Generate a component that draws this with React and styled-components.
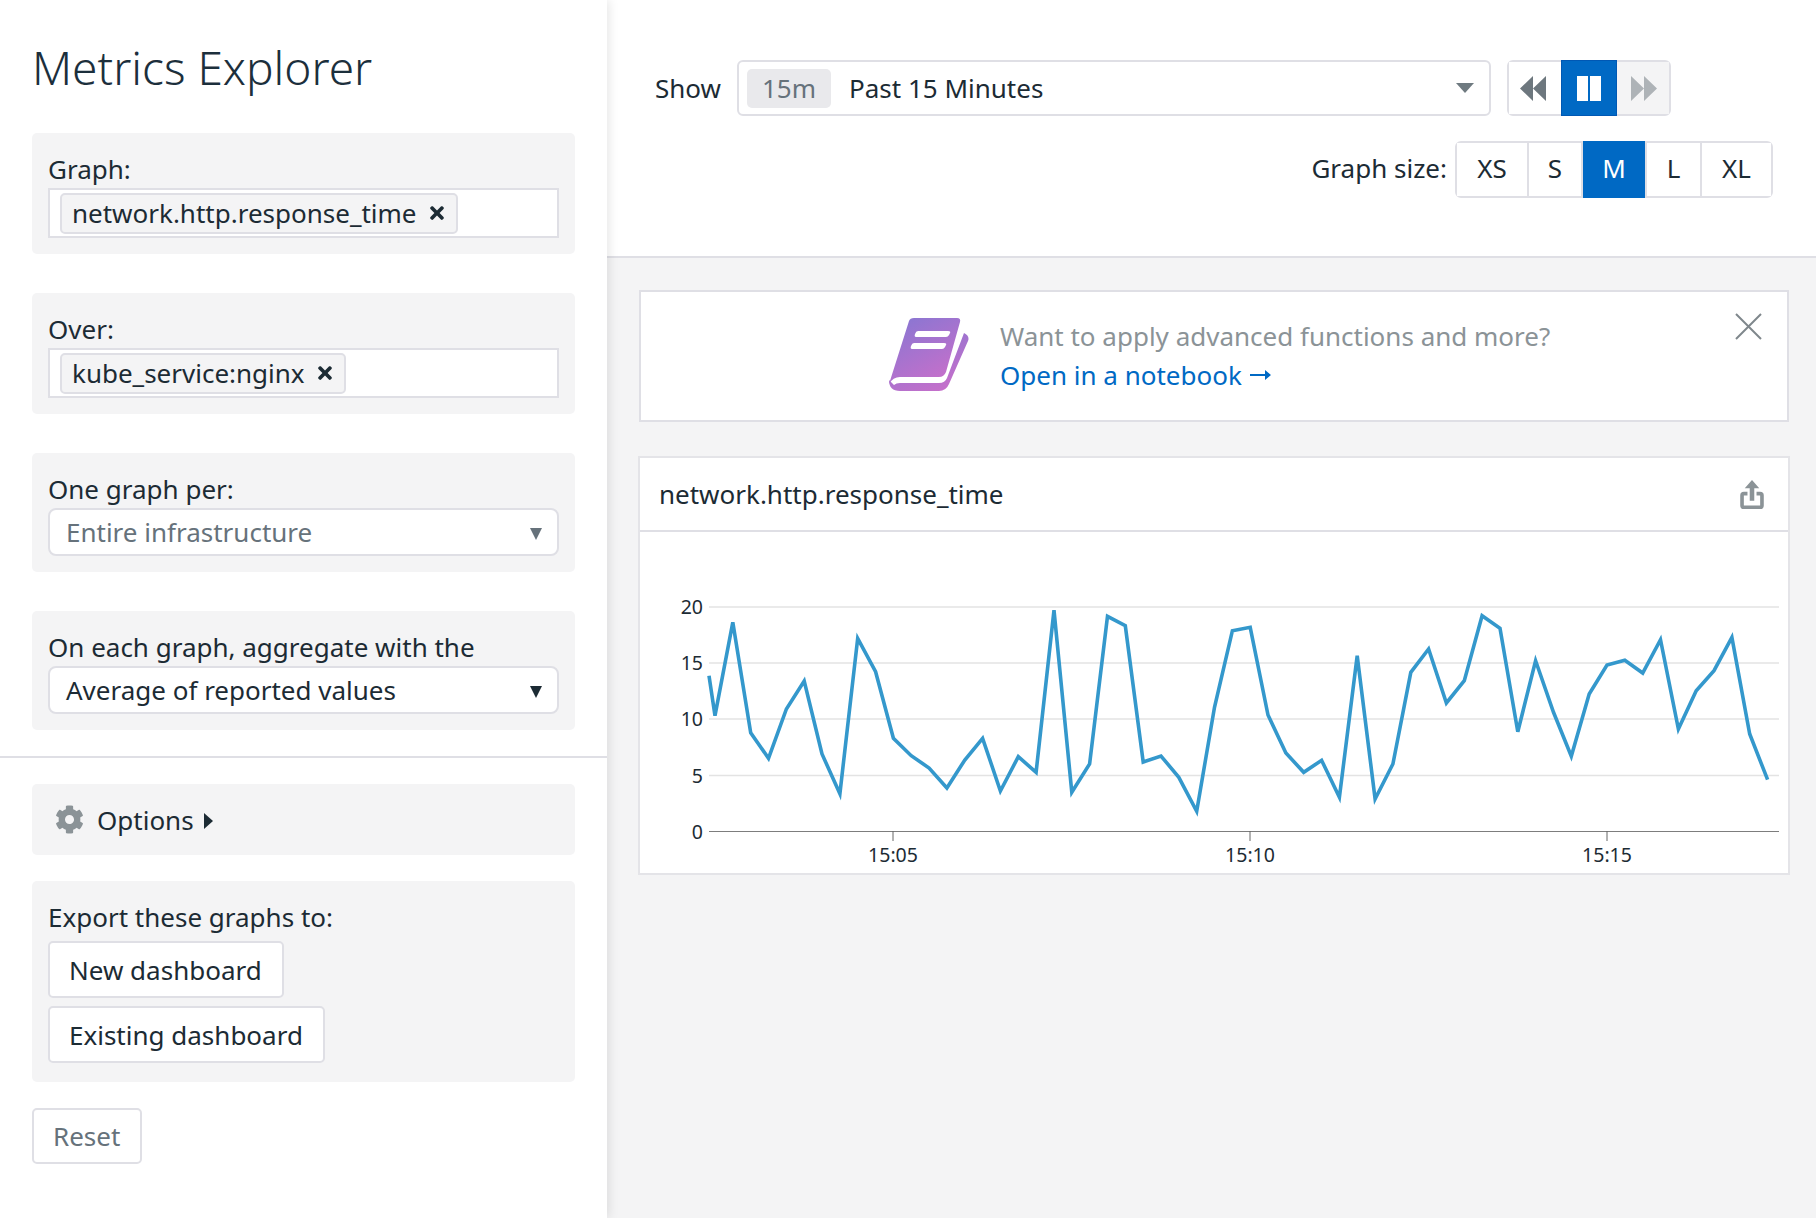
import React from "react";
import styled, { createGlobalStyle } from "styled-components";
import { FaCog, FaTimes } from "react-icons/fa";

const GlobalStyle = createGlobalStyle`
  html, body {
    margin: 0;
    padding: 0;
    background: #fff;
  }
  * {
    box-sizing: border-box;
  }
`;

const seriesY = [
  716.7, 623.3, 733.7, 759.3, 710, 682, 755, 794.7, 639.3, 672.7, 739.3, 756.7,
  769, 789, 761, 739.3, 792, 757.7, 773.3, 611.3, 793.3, 765, 617.3, 626.7, 763,
  757, 778.3, 812.3, 708.3, 631.7, 628.3, 716, 754, 773.3, 761.3, 798.3, 656.7,
  800, 765, 673.3, 650, 704, 681.7, 616.7, 629.3, 732.7, 661.7, 713.3, 757.3,
  695, 666, 661.3, 674, 640.7, 730, 691.7, 671.7, 638.3, 735, 780.7,
];

const CHART_LEFT = 640;
const CHART_TOP = 533;
const grid = [
  { label: "20", y: 608 },
  { label: "15", y: 664 },
  { label: "10", y: 720 },
  { label: "5", y: 776.5 },
];
const ticks = [
  { label: "15:05", x: 893 },
  { label: "15:10", x: 1250 },
  { label: "15:15", x: 1607 },
];
const sizes = [
  { name: "XS", width: 72 },
  { name: "S", width: 54 },
  { name: "M", width: 64 },
  { name: "L", width: 55 },
  { name: "XL", width: 69 },
];

function Chart() {
  const points = seriesY.map(
    (y, i) => `${(715 + i * 17.84 - CHART_LEFT).toFixed(1)},${(y - CHART_TOP).toFixed(1)}`
  );
  const start = `${709 - CHART_LEFT},${676.7 - CHART_TOP}`;
  return (
    <ChartSvg viewBox="0 0 1148 339">
      {grid.map(({ label, y }) => (
        <g key={label}>
          <line x1="69" x2="1139" y1={y - CHART_TOP} y2={y - CHART_TOP} stroke="#e3e3e3" strokeWidth="1.4" />
          <AxisText x="63" y={y - CHART_TOP + 7} textAnchor="end">{label}</AxisText>
        </g>
      ))}
      <line x1="69" x2="1139" y1="299.5" y2="299.5" stroke="#7d7d7d" strokeWidth="1.2" />
      <AxisText x="63" y="307" textAnchor="end">0</AxisText>
      {ticks.map(({ label, x }) => (
        <g key={label}>
          <line x1={x - CHART_LEFT} x2={x - CHART_LEFT} y1="299" y2="309" stroke="#666" strokeWidth="1" />
          <AxisText x={x - CHART_LEFT} y="330" textAnchor="middle">{label}</AxisText>
        </g>
      ))}
      <polyline
        points={`${start} ${points.join(" ")}`}
        fill="none"
        stroke="#3498cc"
        strokeWidth="3.6"
        strokeLinejoin="miter"
      />
    </ChartSvg>
  );
}

function BookIcon() {
  return (
    <BookSvg viewBox="0 0 80 74">
      <defs>
        <linearGradient id="book" x1="0.2" y1="0" x2="0.8" y2="1">
          <stop offset="0" stopColor="#8a76d2" />
          <stop offset="1" stopColor="#c96fca" />
        </linearGradient>
      </defs>
      <path
        fill="url(#book)"
        d="M20 3 Q21 0 25 0 H68 Q72 0 71 4 L57 54 Q55 59 50 59 H11 Q4 59 0 66 Z"
      />
      <path
        fill="url(#book)"
        d="M0 62 Q0 73 11 73 H50 Q57 73 60 66 L79 23 Q81 18 75 15 L58 60 Q56 65 50 65 H11 Q7 65 5 67 Z"
      />
      <path fill="#fff" d="M29 13 H59 Q62 13 61 15 L60 17 Q59 19 57 19 H27 Q25 19 26 16 Q27 13 29 13 Z" />
      <path fill="#fff" d="M25 25 H55 Q58 25 57 27 L56 29 Q55 31 53 31 H23 Q21 31 22 28 Q23 25 25 25 Z" />
    </BookSvg>
  );
}

function ShareIcon() {
  return (
    <svg width="26" height="29" viewBox="0 0 26 32">
      <path d="M13 0 L21 9 H15.5 V23 H10.5 V9 H5 Z" fill="#8b9397" />
      <path
        d="M8 15 H4 Q2 15 2 17 V28 Q2 30 4 30 H22 Q24 30 24 28 V17 Q24 15 22 15 H18"
        fill="none"
        stroke="#8b9397"
        strokeWidth="4"
      />
    </svg>
  );
}

function LinkArrow() {
  return (
    <ArrowSvg viewBox="0 0 21 10">
      <path d="M0 4 H15 V0 L21 5 L15 10 V6 H0 Z" fill="#0069c4" />
    </ArrowSvg>
  );
}

function Rewind({ flip, color }) {
  return (
    <svg width="26" height="25" viewBox="0 0 25 25" preserveAspectRatio="none" style={{ transform: flip ? "scaleX(-1)" : "none" }}>
      <path d="M12.5 0 L0 12.5 L12.5 25 Z M25 0 L12.5 12.5 L25 25 Z" fill={color} />
    </svg>
  );
}

export default function App() {
  return (
    <Page>
      <GlobalStyle />
      <Sidebar>
        <Title>Metrics Explorer</Title>
        <Section $gap={39}>
          <Label>Graph:</Label>
          <TagInput>
            <Tag>
              network.http.response_time
              <FaTimes size={20} color="#1c2b34" />
            </Tag>
          </TagInput>
        </Section>
        <Section $gap={39}>
          <Label>Over:</Label>
          <TagInput>
            <Tag>
              kube_service:nginx
              <FaTimes size={20} color="#1c2b34" />
            </Tag>
          </TagInput>
        </Section>
        <Section $gap={39}>
          <Label>One graph per:</Label>
          <Select $muted>
            Entire infrastructure
            <Caret $muted />
          </Select>
        </Section>
        <Section $gap={26}>
          <Label>On each graph, aggregate with the</Label>
          <Select>
            Average of reported values
            <Caret />
          </Select>
        </Section>
        <Divider />
        <OptionsBar>
          <FaCog size={29} color="#8b9397" />
          <span>Options</span>
          <OptionsArrow />
        </OptionsBar>
        <ExportSection>
          <ExportLabel>Export these graphs to:</ExportLabel>
          <ExportButton>New dashboard</ExportButton>
          <ExportButton>Existing dashboard</ExportButton>
        </ExportSection>
        <ResetButton>Reset</ResetButton>
      </Sidebar>
      <Main>
        <Header>
          <TimeRow>
            <ShowLabel>Show</ShowLabel>
            <TimeSelect>
              <TimePill>15m</TimePill>
              <span>Past 15 Minutes</span>
              <TimeCaret />
            </TimeSelect>
            <Transport>
              <TransportButton $shift={-2}><Rewind color="#6d777e" /></TransportButton>
              <PauseButton>
                <PauseBar />
                <PauseBar />
              </PauseButton>
              <TransportButton $disabled $shift={1}><Rewind flip color="#aeb3b7" /></TransportButton>
            </Transport>
          </TimeRow>
          <SizeRow>
            <SizeLabel>Graph size:</SizeLabel>
            <SizeGroup>
              {sizes.map(({ name, width }) => (
                <SizeButton key={name} $active={name === "M"} $width={width}>
                  {name}
                </SizeButton>
              ))}
            </SizeGroup>
          </SizeRow>
        </Header>
        <Content>
          <Banner>
            <BookIcon />
            <BannerText>
              <BannerLine>Want to apply advanced functions and more?</BannerLine>
              <BannerLink>
                Open in a notebook
                <LinkArrow />
              </BannerLink>
            </BannerText>
            <CloseIcon viewBox="0 0 27 27">
              <path d="M1 1 L26 26 M26 1 L1 26" stroke="#7f878c" strokeWidth="2" fill="none" />
            </CloseIcon>
          </Banner>
          <Card>
            <CardHeader>
              <span>network.http.response_time</span>
              <ShareIcon />
            </CardHeader>
            <Chart />
          </Card>
        </Content>
      </Main>
    </Page>
  );
}

const font = `"Noto Sans", "Open Sans", sans-serif`;

const Page = styled.div`
  display: flex;
  width: 1816px;
  height: 1218px;
  overflow: hidden;
  font-family: ${font};
  font-size: 26px;
  color: #1c2b34;
`;

const Sidebar = styled.aside`
  position: relative;
  z-index: 1;
  flex: 0 0 607px;
  background: #fff;
  padding-top: 39px;
  box-shadow: 2px 0 10px rgba(0, 0, 0, 0.1);
`;

const Title = styled.h1`
  margin: 0 32px 38px;
  font-size: 46px;
  line-height: 56px;
  font-weight: 300;
  color: #1c2f3c;
`;

const Section = styled.div`
  margin: 0 32px ${(props) => props.$gap}px;
  padding: 16px;
  background: #f4f4f5;
  border-radius: 5px;
`;

const Label = styled.div`
  height: 39px;
  line-height: 40px;
`;

const TagInput = styled.div`
  display: flex;
  align-items: center;
  height: 50px;
  padding-left: 10px;
  background: #fff;
  border: 2px solid #dfdfe5;
`;

const Tag = styled.div`
  display: flex;
  align-items: center;
  gap: 10px;
  height: 41px;
  padding: 0 9px 0 10px;
  background: #f4f4f5;
  border: 2px solid #dfdfe5;
  border-radius: 5px;
`;

const Select = styled.div`
  display: flex;
  align-items: center;
  justify-content: space-between;
  height: 48px;
  padding: 0 15px 0 16px;
  background: #fff;
  border: 2px solid #dfdfe5;
  border-radius: 8px;
  color: ${(props) => (props.$muted ? "#66727b" : "#1c2b34")};
`;

const Caret = styled.i`
  width: 0;
  height: 0;
  margin-top: 3px;
  border-left: 6px solid transparent;
  border-right: 6px solid transparent;
  border-top: 12px solid ${(props) => (props.$muted ? "#66727b" : "#1c2b34")};
`;

const Divider = styled.hr`
  margin: 0 0 26px;
  border: 0;
  border-top: 2px solid #dfdfe5;
`;

const OptionsBar = styled.div`
  display: flex;
  align-items: center;
  height: 71px;
  margin: 0 32px 26px;
  padding-left: 23px;
  background: #f4f4f5;
  border-radius: 5px;

  span {
    margin-left: 13px;
  }
`;

const OptionsArrow = styled.i`
  width: 0;
  height: 0;
  margin: 3px 0 0 10px;
  border-top: 8px solid transparent;
  border-bottom: 8px solid transparent;
  border-left: 9px solid #1c2b34;
`;

const ExportSection = styled.div`
  display: flex;
  flex-direction: column;
  align-items: flex-start;
  gap: 8px;
  height: 201px;
  margin: 0 32px 26px;
  padding: 16px;
  background: #f4f4f5;
  border-radius: 5px;
`;

const ExportLabel = styled.div`
  height: 36px;
  line-height: 40px;
`;

const PlainButton = styled.div`
  display: flex;
  align-items: center;
  height: 56px;
  padding: 0 20px 0 19px;
  background: #fff;
  border: 2px solid #dfdfe5;
  border-radius: 5px;
`;

const ExportButton = styled(PlainButton)`
  height: 57px;
`;

const ResetButton = styled(PlainButton)`
  width: 110px;
  margin-left: 32px;
  color: #66727b;
`;

const Main = styled.main`
  flex: 1;
  background: #f4f4f5;
`;

const Header = styled.header`
  height: 258px;
  padding: 60px 44px 0 48px;
  background: #fff;
  border-bottom: 2px solid #dfdfe5;
`;

const TimeRow = styled.div`
  display: flex;
  align-items: center;
  height: 56px;
`;

const ShowLabel = styled.span`
  width: 82px;
`;

const TimeSelect = styled.div`
  display: flex;
  align-items: center;
  gap: 18px;
  width: 754px;
  height: 56px;
  padding: 0 15px 0 8px;
  background: #fff;
  border: 2px solid #dfdfe5;
  border-radius: 6px;
`;

const TimePill = styled.span`
  display: flex;
  align-items: center;
  justify-content: center;
  width: 84px;
  height: 39px;
  background: #e9e9ec;
  border-radius: 5px;
  color: #66727b;
`;

const TimeCaret = styled.i`
  width: 0;
  height: 0;
  margin-left: auto;
  border-left: 9px solid transparent;
  border-right: 9px solid transparent;
  border-top: 10px solid #6f7a80;
`;

const Transport = styled.div`
  display: flex;
  width: 164px;
  height: 56px;
  margin-left: 16px;
  border: 2px solid #dfdfe5;
  border-radius: 6px;
`;

const TransportButton = styled.div`
  display: flex;
  align-items: center;
  justify-content: center;
  flex: 1;
  background: ${(props) => (props.$disabled ? "#f4f4f5" : "#fff")};

  svg {
    margin-left: ${(props) => props.$shift * 2}px;
  }
`;

const PauseButton = styled.div`
  display: flex;
  align-items: center;
  justify-content: center;
  gap: 2px;
  flex: 0 0 56px;
  margin: -2px 0;
  background: #0069c4;
  border: 1px solid #0058b4;
`;

const PauseBar = styled.i`
  width: 11px;
  height: 25px;
  background: #fff;
`;

const SizeRow = styled.div`
  display: flex;
  align-items: center;
  justify-content: flex-end;
  gap: 8px;
  margin-top: 25px;
`;

const SizeLabel = styled.span`
  padding-bottom: 3px;
`;

const SizeGroup = styled.div`
  display: flex;
  height: 57px;
  border: 2px solid #dfdfe5;
  border-radius: 6px;
`;

const SizeButton = styled.div`
  display: flex;
  align-items: center;
  justify-content: center;
  width: ${(props) => props.$width}px;
  padding-bottom: 3px;
  background: ${(props) => (props.$active ? "#0069c4" : "#fff")};
  color: ${(props) => (props.$active ? "#fff" : "#1c2b34")};
  border-right: 2px solid #dfdfe5;
  margin: ${(props) => (props.$active ? "-2px 0" : "0")};

  &:last-child {
    border-right: 0;
  }
`;

const Content = styled.div`
  padding: 32px 27px 0 31px;
`;

const Banner = styled.section`
  position: relative;
  display: flex;
  align-items: center;
  gap: 31px;
  width: 1150px;
  height: 132px;
  margin: 0 0 34px 1px;
  padding-left: 248px;
  background: #fff;
  border: 2px solid #dfdfe5;
`;

const BookSvg = styled.svg`
  width: 80px;
  height: 74px;
  margin-top: -3px;
`;

const BannerText = styled.div`
  display: flex;
  flex-direction: column;
  gap: 3px;
  margin-top: -1px;
`;

const BannerLine = styled.div`
  line-height: 36px;
  color: #8b9397;
`;

const BannerLink = styled.a`
  display: flex;
  align-items: center;
  gap: 8px;
  line-height: 36px;
  color: #0069c4;
`;

const ArrowSvg = styled.svg`
  width: 21px;
  height: 10px;
`;

const CloseIcon = styled.svg`
  position: absolute;
  top: 21px;
  right: 25px;
  width: 27px;
  height: 27px;
`;

const Card = styled.section`
  width: 1152px;
  height: 419px;
  background: #fff;
  border: 2px solid #e4e4e8;
`;

const CardHeader = styled.div`
  display: flex;
  align-items: center;
  justify-content: space-between;
  height: 74px;
  padding: 0 23px 0 19px;
  border-bottom: 2px solid #dfdfe5;
`;

const ChartSvg = styled.svg`
  display: block;
  width: 1148px;
  height: 339px;
`;

const AxisText = styled.text`
  font-family: ${font};
  font-size: 19.5px;
  fill: #1c2b34;
`;
